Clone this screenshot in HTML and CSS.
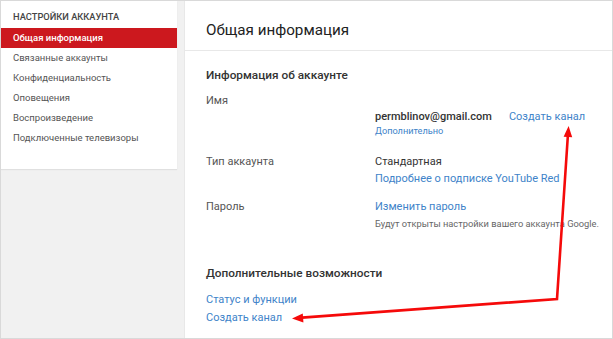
FILE: index.html
```html
<!DOCTYPE html>
<html lang="ru">
<head>
  <meta charset="UTF-8" />
  <title>Настройки аккаунта</title>
  <link rel="stylesheet" href="styles.css">
</head>
<body>
  <div class="page">
    <aside class="sidebar">
      <nav class="nav">
        <div class="nav-title">НАСТРОЙКИ АККАУНТА</div>
        <a class="nav-item active">Общая информация</a>
        <a class="nav-item">Связанные аккаунты</a>
        <a class="nav-item">Конфиденциальность</a>
        <a class="nav-item">Оповещения</a>
        <a class="nav-item">Воспроизведение</a>
        <a class="nav-item">Подключенные телевизоры</a>
      </nav>
    </aside>

    <main class="main">
      <div class="header"><h1>Общая информация</h1></div>

      <section class="section">
        <h2>Информация об аккаунте</h2>

        <div class="row row-name">
          <div class="label">Имя</div>
          <div class="value">
            <div class="email-line">
              <span class="email">permblinov@gmail.com</span>
              <a class="link">Создать канал</a>
            </div>
            <a class="link small">Дополнительно</a>
          </div>
        </div>

        <div class="row row-type">
          <div class="label">Тип аккаунта</div>
          <div class="value">
            <div class="text">Стандартная</div>
            <a class="link">Подробнее о подписке YouTube Red</a>
          </div>
        </div>

        <div class="row row-pass">
          <div class="label">Пароль</div>
          <div class="value">
            <a class="link">Изменить пароль</a>
            <div class="note">Будут открыты настройки вашего аккаунта Google.</div>
          </div>
        </div>
      </section>

      <section class="section extra">
        <h2>Дополнительные возможности</h2>
        <div class="links">
          <a class="link">Статус и функции</a>
          <a class="link">Создать канал</a>
        </div>
      </section>
    </main>

    <svg class="arrows" width="613" height="339" viewBox="0 0 613 339">
      <polyline points="567.9,135 557,299 302,317.6" fill="none" stroke="#f50a0a" stroke-width="2.6" stroke-linejoin="miter"/>
      <polygon points="568.6,126 572.2,137.3 563.6,136.7" fill="#f50a0a"/>
      <polygon points="292,318.6 303.4,322.4 302.8,313.4" fill="#f50a0a"/>
    </svg>
  </div>
</body>
</html>
```

FILE: styles.css
```css
* {
  box-sizing: border-box;
}
body {
  margin: 0;
  font-family: Roboto, 'Noto Sans', sans-serif;
  background: #fff;
  color: #333;
}
.page {
  position: relative;
  display: flex;
  width: 613px;
  height: 339px;
  border: 1px solid #d9d9d9;
  overflow: hidden;
}
.sidebar {
  width: 184px;
  flex-shrink: 0;
  background: #f1f1f1;
  border-right: 1px solid #e8e8e8;
}
.nav {
  width: 176px;
  background: #fff;
  padding: 8px 0 21px;
  box-shadow: 0 1px 1px #e0e0e0;
}
.nav-title {
  padding-left: 12px;
  font-size: 9.3px;
  font-weight: 500;
  line-height: 16px;
  color: #444;
  margin-bottom: 3px;
}
.nav-item {
  display: block;
  padding-left: 12px;
  font-size: 9.5px;
  line-height: 20px;
  color: #555;
}
.nav-item.active {
  background: #cc181e;
  color: #fff;
  font-weight: 500;
}
.main {
  flex: 1;
  background: #fff;
}
.header {
  height: 50px;
  border-bottom: 1px solid #e8e8e8;
  padding: 19px 0 0 21px;
}
h1 {
  margin: 0;
  font-size: 15.2px;
  font-weight: 400;
  line-height: 20px;
  color: #222;
}
.section {
  padding: 16px 0 0 21px;
}
h2 {
  margin: 0;
  font-size: 11.8px;
  font-weight: 500;
  line-height: 16px;
  color: #333;
}
.row {
  display: grid;
  grid-template-columns: 169px 1fr;
  font-size: 11px;
  line-height: 16px;
}
.row-name { margin-top: 10px; }
.row-type { margin-top: 17px; }
.row-pass { margin-top: 12px; }
.label {
  color: #555;
}
.row-name .value {
  padding-top: 16px;
}
.email-line {
  display: flex;
  gap: 17px;
}
.email {
  font-weight: 500;
  color: #333;
}
.text {
  color: #333;
}
.link {
  display: block;
  color: #4083c9;
  font-size: 11px;
  line-height: 16px;
}
.email-line .link {
  display: inline;
}
.link.small {
  font-size: 9.2px;
  line-height: 12px;
}
.row-type .link {
  margin-top: 1px;
}
.note {
  margin-top: 3px;
  font-size: 9.3px;
  line-height: 12px;
  color: #666;
}
.extra {
  padding-top: 35px;
}
.links {
  margin-top: 10px;
}
.links .link {
  line-height: 18px;
}
.arrows {
  position: absolute;
  left: -1px;
  top: -1px;
  pointer-events: none;
}
```
